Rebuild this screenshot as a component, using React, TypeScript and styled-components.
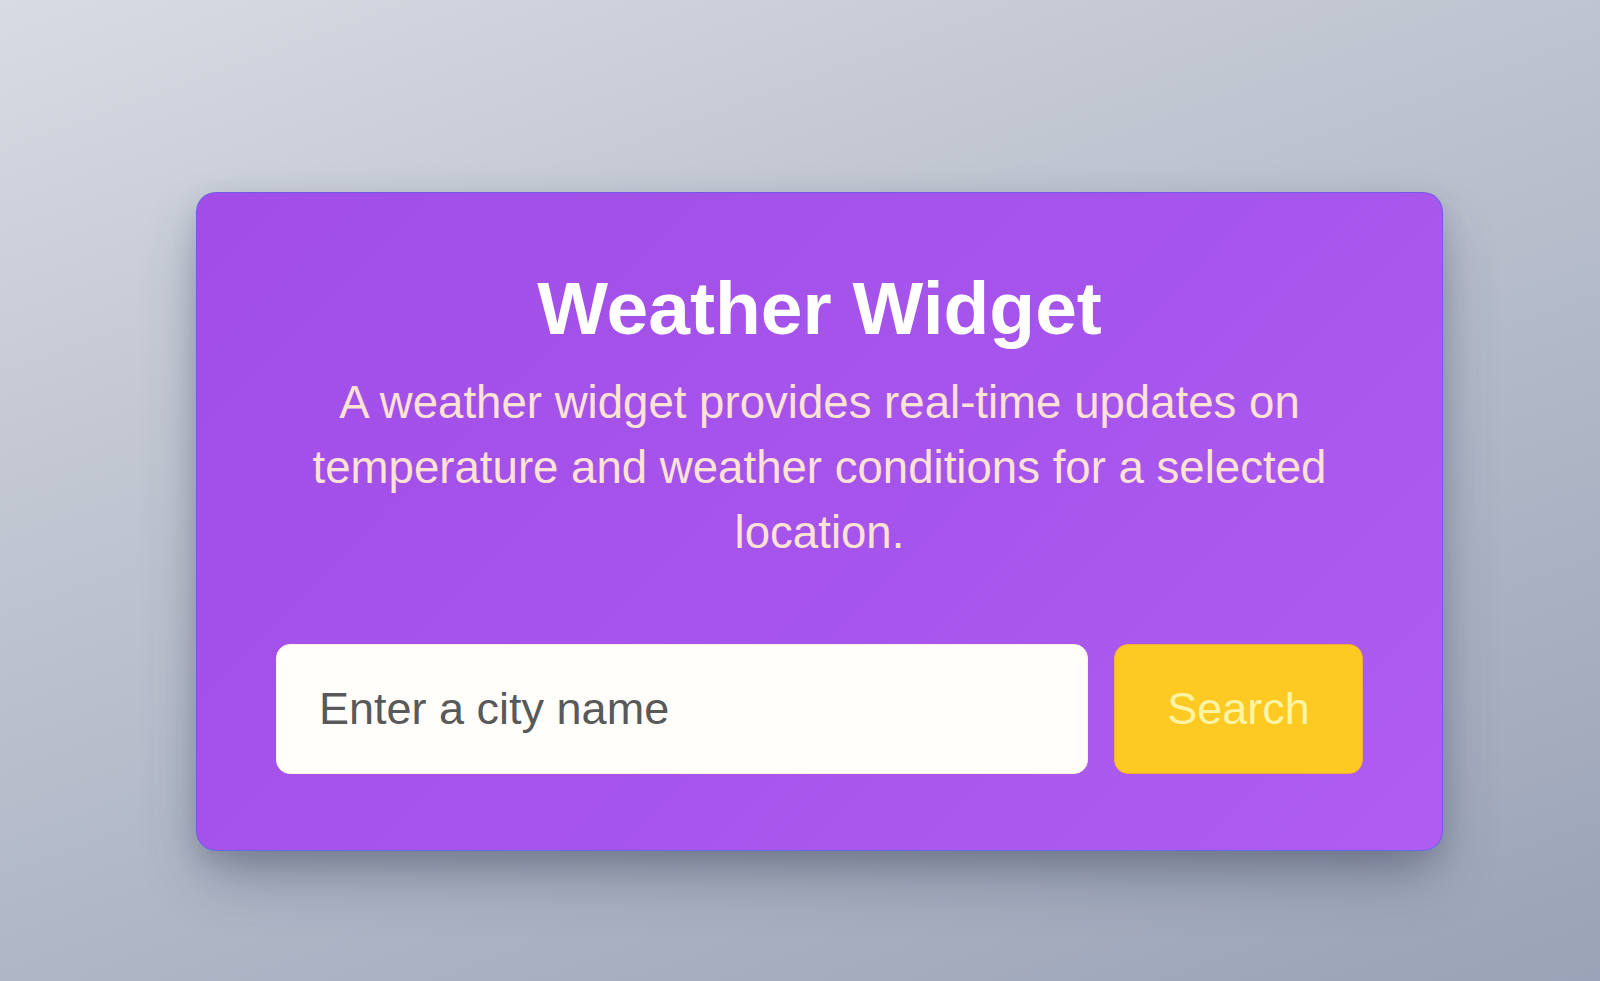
import React from "react";
import styled, { createGlobalStyle } from "styled-components";

const GlobalStyle = createGlobalStyle`
  html, body {
    margin: 0;
    padding: 0;
  }
  body {
    font-family: "Liberation Sans", Arial, sans-serif;
  }
`;

const Page = styled.main`
  box-sizing: border-box;
  width: 1600px;
  height: 981px;
  overflow: hidden;
  padding: 192px 0 0 196px;
  background: linear-gradient(160deg, #d6dbe4 0%, #c3c8d3 30%, #aeb5c5 65%, #9aa3b7 100%);
`;

const Card = styled.section`
  box-sizing: border-box;
  width: 1247px;
  height: 659px;
  padding: 71px 79px 0;
  border: 1px solid #6d5ce8;
  border-bottom-color: #5f6ce6;
  border-radius: 20px;
  background: linear-gradient(135deg, #a24de8 0%, #a655ec 55%, #b05cf2 100%);
  box-shadow: 0 30px 60px -10px rgba(60, 66, 90, 0.45), 0 10px 25px rgba(70, 75, 100, 0.2);
  display: flex;
  flex-direction: column;
  align-items: center;
`;

const Title = styled.h1`
  margin: 0;
  font-family: "Liberation Sans", Arial, sans-serif;
  font-size: 75px;
  font-weight: 700;
  line-height: 89px;
  letter-spacing: 0;
  color: #ffffff;
  text-align: center;
  white-space: nowrap;
`;

const Description = styled.p`
  margin: 17px -20px 0;
  font-family: "Liberation Sans", Arial, sans-serif;
  font-size: 45.6px;
  line-height: 65px;
  color: #fde2d6;
  text-align: center;
  white-space: nowrap;
`;

const Form = styled.form`
  align-self: stretch;
  margin: 79px 0 0;
  display: flex;
  gap: 26px;
`;

const CityInput = styled.input`
  box-sizing: border-box;
  flex: 1;
  min-width: 0;
  height: 130px;
  padding: 0 0 0 42px;
  border: 1px solid #fff3dc;
  border-radius: 14px;
  background: #fffefb;
  font-family: "Liberation Sans", Arial, sans-serif;
  font-size: 45px;
  color: #333;
  outline: none;
  &::placeholder {
    color: #595959;
  }
`;

const SearchButton = styled.button`
  box-sizing: border-box;
  width: 249px;
  height: 130px;
  border: 1px solid #f4a93a;
  border-radius: 14px;
  background: #fdca24;
  font-family: "Liberation Sans", Arial, sans-serif;
  font-size: 45px;
  color: #fef4a4;
  cursor: pointer;
`;

export default function App() {
  return (
    <>
      <GlobalStyle />
      <Page>
        <Card>
          <Title>Weather Widget</Title>
          <Description>
            A weather widget provides real-time updates on
            <br />
            temperature and weather conditions for a selected
            <br />
            location.
          </Description>
          <Form onSubmit={(e) => e.preventDefault()}>
            <CityInput type="text" placeholder="Enter a city name" />
            <SearchButton type="submit">Search</SearchButton>
          </Form>
        </Card>
      </Page>
    </>
  );
}
